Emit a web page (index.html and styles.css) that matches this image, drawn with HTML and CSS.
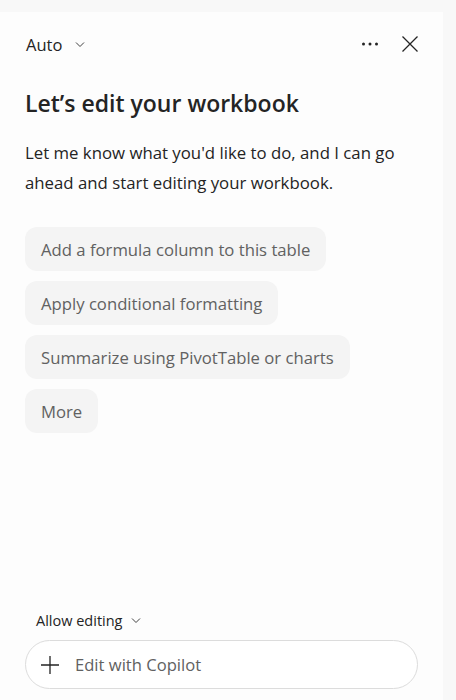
FILE: index.html
```html
<!DOCTYPE html>
<html lang="en">
<head>
<meta charset="utf-8">
<title>Copilot</title>
<link rel="stylesheet" href="styles.css">
</head>
<body>
<div class="panel">
  <div class="header">
    <button class="mode">Auto
      <svg class="chev" width="12" height="12" viewBox="0 0 12 12"><path d="M2 4.5 L6 8.5 L10 4.5" fill="none" stroke="#424242" stroke-width="1"/></svg>
    </button>
    <div class="actions">
      <svg class="icon" width="20" height="20" viewBox="0 0 20 20"><circle cx="3.5" cy="10" r="1.5" fill="#242424"/><circle cx="10" cy="10" r="1.5" fill="#242424"/><circle cx="16.5" cy="10" r="1.5" fill="#242424"/></svg>
      <svg class="icon" width="20" height="20" viewBox="0 0 20 20"><path d="M2.5 2.5 L17.5 17.5 M17.5 2.5 L2.5 17.5" stroke="#242424" stroke-width="1.3" fill="none"/></svg>
    </div>
  </div>
  <h1 class="title">Let’s edit your workbook</h1>
  <p class="intro">Let me know what you'd like to do, and I can go ahead and start editing your workbook.</p>
  <div class="chips">
    <button class="chip">Add a formula column to this table</button>
    <button class="chip">Apply conditional formatting</button>
    <button class="chip">Summarize using PivotTable or charts</button>
    <button class="chip">More</button>
  </div>
  <div class="spacer"></div>
  <button class="allow">Allow editing
    <svg class="chev" width="12" height="12" viewBox="0 0 12 12"><path d="M2 4.5 L6 8.5 L10 4.5" fill="none" stroke="#424242" stroke-width="1"/></svg>
  </button>
  <div class="composer">
    <svg class="plus" width="20" height="20" viewBox="0 0 20 20"><path d="M10 1 V19 M1 10 H19" stroke="#242424" stroke-width="1.3" fill="none"/></svg>
    <span class="placeholder">Edit with Copilot</span>
  </div>
</div>
</body>
</html>
```

FILE: styles.css
```css
* { box-sizing: border-box; }
html, body { margin: 0; padding: 0; }
body {
  background: #f8f8f8;
  font-family: "Open Sans", "Noto Sans", sans-serif;
  color: #242424;
  height: 700px;
  overflow: hidden;
}
button {
  font-family: inherit;
  border: none;
  background: none;
  padding: 0;
  cursor: pointer;
}
.panel {
  width: 443px;
  height: 688px;
  margin-top: 12px;
  background: #fdfdfd;
  display: flex;
  flex-direction: column;
  padding: 0 25px 11px 25px;
}
.header {
  display: flex;
  align-items: center;
  justify-content: space-between;
  height: 40px;
  margin-top: 12px;
}
.mode {
  display: flex;
  align-items: center;
  gap: 12px;
  font-size: 16.5px;
  color: #242424;
  padding-left: 1px;
}
.actions {
  display: flex;
  align-items: center;
  gap: 20px;
  margin-right: -2px;
}
.icon { display: block; }
.title {
  margin: 25px 0 0 0;
  font-size: 23px;
  line-height: 28px;
  font-weight: 600;
  color: #242424;
}
.intro {
  margin: 21px 0 0 0;
  font-size: 16.8px;
  line-height: 30px;
  color: #242424;
  padding-right: 10px;
}
.chips {
  margin-top: 29px;
  display: flex;
  flex-direction: column;
  align-items: flex-start;
  gap: 10px;
}
.chip {
  background: #f4f4f4;
  border-radius: 12px;
  height: 44px;
  padding: 0 16px;
  font-size: 16.7px;
  color: #616161;
}
.spacer { flex: 1; }
.allow {
  align-self: flex-start;
  display: flex;
  align-items: center;
  gap: 8px;
  font-size: 14.5px;
  color: #242424;
  margin-left: 11px;
  height: 20px;
}
.composer {
  margin-top: 10px;
  height: 49px;
  width: 393px;
  border: 1px solid #dcdcdc;
  border-radius: 25px;
  background: #ffffff;
  display: flex;
  align-items: center;
  padding-left: 14px;
  gap: 15px;
}
.plus { display: block; }
.placeholder {
  font-size: 16.6px;
  color: #616161;
}
```
